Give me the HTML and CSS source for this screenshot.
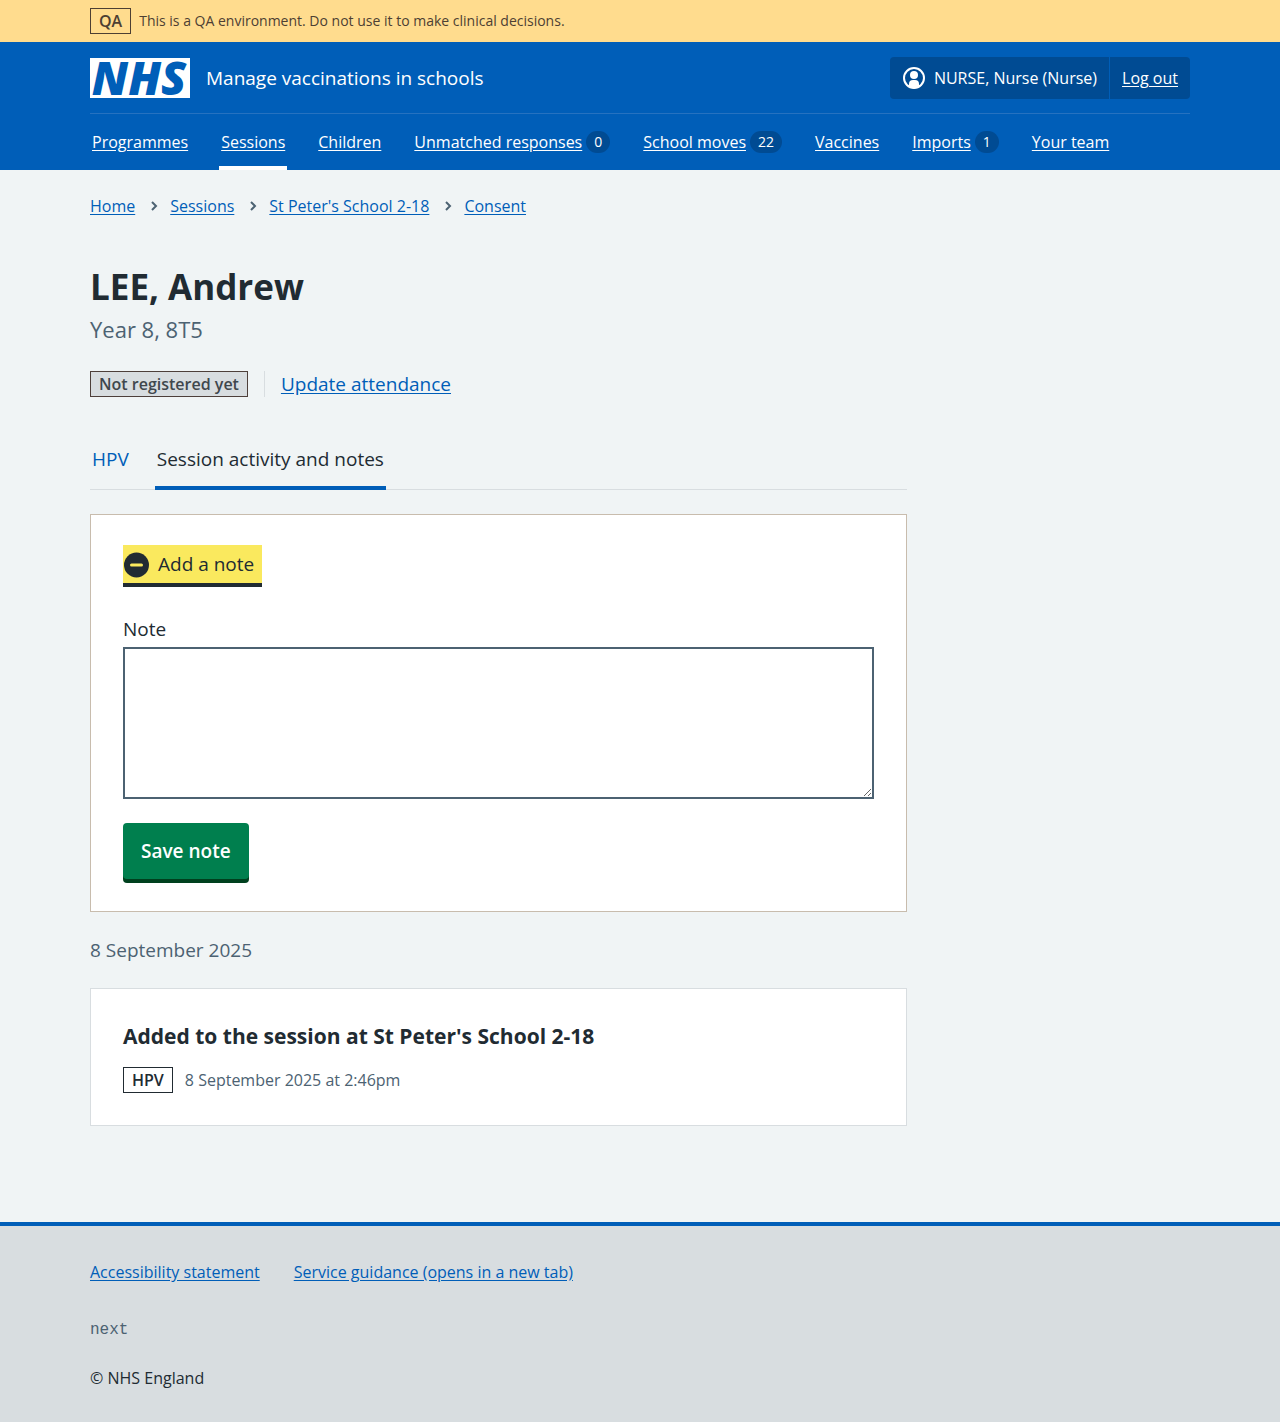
FILE: index.html
```html
<!DOCTYPE html>
<html lang="en">
<head>
<meta charset="utf-8">
<meta name="viewport" content="width=device-width, initial-scale=1">
<title>LEE, Andrew – Manage vaccinations in schools</title>
<link rel="stylesheet" href="styles.css">
</head>
<body>
<div class="environment">
  <div class="container environment-inner">
    <strong class="tag tag-environment">QA</strong>
    <span>This is a QA environment. Do not use it to make clinical decisions.</span>
  </div>
</div>

<header class="header">
  <div class="container">
    <div class="header-top">
      <a class="service" href="#">
        <svg class="logo" viewBox="0 0 100 40" width="100" height="40" role="img" aria-label="NHS">
          <rect width="100" height="40" fill="#fff"/>
          <text class="logo-text" x="49" y="37" text-anchor="middle">NHS</text>
        </svg>
        <span>Manage vaccinations in schools</span>
      </a>
      <div class="account">
        <div class="account-item">
          <svg class="account-icon" viewBox="0 0 24 24" width="24" height="24" aria-hidden="true">
            <circle cx="12" cy="12" r="10" fill="none" stroke="#fff" stroke-width="2"/>
            <circle cx="12" cy="9" r="4" fill="#fff"/>
            <path d="M7 21v-3a4 4 0 0 1 4-4h2a4 4 0 0 1 4 4v3a10 10 0 0 1-10 0z" fill="#fff"/>
          </svg>
          <span>NURSE, Nurse (Nurse)</span>
        </div>
        <a class="account-item account-logout" href="#">Log out</a>
      </div>
    </div>
    <nav class="nav" aria-label="Primary">
      <a class="nav-link" href="#"><span class="nav-label">Programmes</span></a>
      <a class="nav-link nav-current" href="#" aria-current="page"><span class="nav-label">Sessions</span></a>
      <a class="nav-link" href="#"><span class="nav-label">Children</span></a>
      <a class="nav-link" href="#"><span class="nav-label">Unmatched responses</span><span class="count">0</span></a>
      <a class="nav-link" href="#"><span class="nav-label">School moves</span><span class="count">22</span></a>
      <a class="nav-link" href="#"><span class="nav-label">Vaccines</span></a>
      <a class="nav-link" href="#"><span class="nav-label">Imports</span><span class="count">1</span></a>
      <a class="nav-link" href="#"><span class="nav-label">Your team</span></a>
    </nav>
  </div>
</header>

<div class="container page">
  <nav class="breadcrumb" aria-label="Breadcrumb">
    <a href="#">Home</a>
    <svg class="chevron" viewBox="0 0 8 10" width="8" height="10" aria-hidden="true"><path d="M2 1l4 4-4 4"/></svg>
    <a href="#">Sessions</a>
    <svg class="chevron" viewBox="0 0 8 10" width="8" height="10" aria-hidden="true"><path d="M2 1l4 4-4 4"/></svg>
    <a href="#">St Peter's School 2-18</a>
    <svg class="chevron" viewBox="0 0 8 10" width="8" height="10" aria-hidden="true"><path d="M2 1l4 4-4 4"/></svg>
    <a href="#">Consent</a>
  </nav>

  <main class="main">
    <h1 class="title">LEE, Andrew</h1>
    <p class="caption">Year 8, 8T5</p>
    <div class="status">
      <strong class="tag tag-grey">Not registered yet</strong>
      <a class="status-action" href="#">Update attendance</a>
    </div>

    <nav class="tabs" aria-label="Patient">
      <a class="tab" href="#">HPV</a>
      <a class="tab tab-current" href="#" aria-current="page">Session activity and notes</a>
    </nav>

    <details class="card note" open>
      <summary class="note-summary">
        <svg viewBox="0 0 27 27" width="27" height="27" aria-hidden="true">
          <circle cx="13.500" cy="14" r="12.500" fill="#212b32"/>
          <path d="M8.500 14h10" stroke="#fae95e" stroke-width="3" stroke-linecap="round"/>
        </svg>
        <span>Add a note</span>
      </summary>
      <form class="note-form">
        <label class="label" for="note">Note</label>
        <textarea class="textarea" id="note" name="note" rows="5"></textarea>
        <button class="button" type="button">Save note</button>
      </form>
    </details>

    <h2 class="date">8 September 2025</h2>

    <article class="card event">
      <h3 class="event-title">Added to the session at St Peter's School 2-18</h3>
      <div class="event-meta">
        <strong class="tag tag-white">HPV</strong>
        <span>8 September 2025 at 2:46pm</span>
      </div>
    </article>
  </main>
</div>

<footer class="footer">
  <div class="container">
    <div class="footer-links">
      <a href="#">Accessibility statement</a>
      <a href="#">Service guidance (opens in a new tab)</a>
    </div>
    <p class="version">next</p>
    <p class="copyright">© NHS England</p>
  </div>
</footer>
</body>
</html>
```
FILE: styles.css
```css
:root {
  --blue: #005eb8;
  --dark-blue: #004b93;
  --text: #212b32;
  --secondary: #4c6272;
  --page: #f0f4f5;
  --grey: #d8dde0;
}

*, *::before, *::after { box-sizing: border-box; }

body {
  margin: 0;
  display: flex;
  flex-direction: column;
  min-height: 100vh;
  background: var(--page);
  color: var(--text);
  font-family: "Open Sans", "Noto Sans", sans-serif;
  font-size: 16px;
  line-height: 24px;
}

h1, h2, h3, p { margin: 0; }

a {
  color: var(--blue);
  text-underline-offset: 2px;
}

.container {
  width: calc(100% - 64px);
  max-width: 1100px;
  margin: 0 auto;
}

.tag {
  display: inline-block;
  border: 1px solid;
  padding: 0 8px;
  font-weight: 600;
  line-height: 24px;
  white-space: nowrap;
}

.tag-environment { color: #4d3f33; }
.tag-grey { background: var(--grey); border-color: #4d3f3a; color: #3f474d; }
.tag-white { background: #fff; }

.environment {
  background: #ffdc8e;
  color: #4d3f33;
  font-size: 14px;
}

.environment .tag { font-size: 16px; }

.environment-inner {
  display: flex;
  align-items: center;
  gap: 8px;
  padding: 8px 0;
}

.header {
  background: var(--blue);
  color: #fff;
}

.header a { color: #fff; }

.header-top {
  display: flex;
  align-items: center;
  justify-content: space-between;
  padding: 15px 0 14px;
  border-bottom: 1px solid #2672c0;
}

.service {
  display: flex;
  align-items: center;
  gap: 16px;
  font-size: 19px;
  text-decoration: none;
}

.logo { overflow: visible; }

.logo-text {
  fill: var(--blue);
  font-size: 46px;
  font-style: italic;
  font-weight: 800;
}

.account {
  display: flex;
  border-radius: 4px;
  background: var(--dark-blue);
}

.account-item {
  display: flex;
  align-items: center;
  gap: 8px;
  padding: 9px 12px;
}

.account-logout { border-left: 1px solid var(--blue); }

.nav {
  display: flex;
  flex-wrap: wrap;
  gap: 0 29px;
}

.nav-link {
  display: flex;
  align-items: center;
  gap: 4px;
  padding: 16px 2px 12px;
  border-bottom: 4px solid transparent;
  text-decoration: none;
}

.nav-label { text-decoration: underline; }
.nav-current { border-bottom-color: #fff; }

.count {
  min-width: 24px;
  padding: 0 8px;
  border-radius: 12px;
  background: var(--dark-blue);
  font-size: 14px;
  line-height: 22px;
  text-align: center;
}

.page { flex: 1; padding: 24px 0 96px; }

.breadcrumb {
  display: flex;
  flex-wrap: wrap;
  align-items: center;
  gap: 0 12px;
}

.chevron {
  margin-left: 3px;
  fill: none;
  stroke: var(--secondary);
  stroke-width: 2;
}

.main {
  width: calc(75% - 8px);
  padding-top: 45px;
}

.title {
  font-size: 35px;
  font-weight: 700;
  line-height: 48px;
}

.caption {
  color: var(--secondary);
  font-size: 22px;
  line-height: 36px;
}

.status {
  display: flex;
  align-items: center;
  gap: 16px;
  margin-top: 24px;
  font-size: 19px;
}

.status .tag { font-size: 16px; }

.status-action {
  padding-left: 16px;
  border-left: 1px solid var(--grey);
  line-height: 26px;
}

.tabs {
  display: flex;
  gap: 24px;
  margin-top: 32px;
  box-shadow: inset 0 -1px var(--grey);
  font-size: 19px;
}

.tab {
  padding: 18px 2px 14px;
  border-bottom: 4px solid transparent;
  line-height: 25px;
  text-decoration: none;
}

.tab-current {
  border-bottom-color: var(--blue);
  color: var(--text);
}

.card {
  margin-top: 24px;
  padding: 32px;
  border: 1px solid var(--grey);
  background: #fff;
}

.note {
  padding: 30px 32px 28px;
  border-color: #c8bcad;
}

.note-summary {
  display: flex;
  align-items: center;
  gap: 8px;
  width: fit-content;
  padding: 5px 8px 5px 0;
  background: #fae95e;
  box-shadow: 0 4px var(--text);
  font-size: 19px;
  line-height: 28px;
  list-style: none;
}

.note-form { padding-top: 32px; }

.label {
  display: block;
  margin-bottom: 4px;
  font-size: 19px;
  line-height: 28px;
}

.textarea {
  display: block;
  width: 100%;
  height: 152px;
  padding: 4px;
  border: 2px solid var(--secondary);
  background: #fff;
  font: inherit;
  resize: vertical;
}

.button {
  display: block;
  margin: 24px 0 4px;
  padding: 14px 18px;
  border: 0;
  border-radius: 4px;
  background: #007f4e;
  box-shadow: 0 4px #00401e;
  color: #fff;
  font: inherit;
  font-size: 19px;
  font-weight: 600;
  line-height: 28px;
}

.date {
  margin-top: 24px;
  color: var(--secondary);
  font-size: 19px;
  font-weight: 400;
  line-height: 28px;
}

.event-title {
  font-size: 21px;
  font-weight: 700;
  line-height: 30px;
}

.event-meta {
  display: flex;
  align-items: center;
  gap: 12px;
  margin-top: 16px;
  color: var(--secondary);
}

.event-meta .tag { color: var(--text); }

.footer {
  padding: 34px 0 32px;
  border-top: 4px solid var(--blue);
  background: var(--grey);
}

.footer-links {
  display: flex;
  flex-wrap: wrap;
  gap: 0 34px;
}

.version {
  margin-top: 34px;
  color: var(--secondary);
  font-family: "Liberation Mono", monospace;
}

.copyright { margin-top: 24px; }
```
